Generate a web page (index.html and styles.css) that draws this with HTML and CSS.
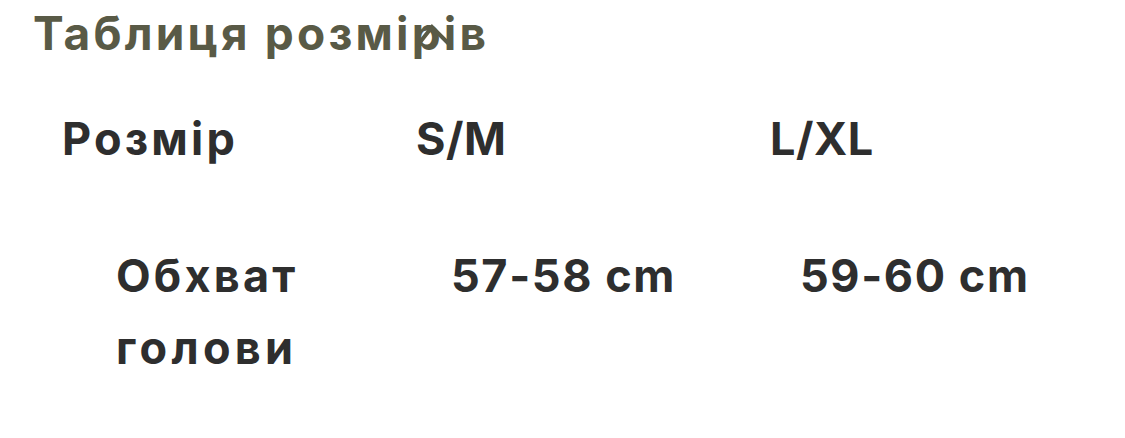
FILE: index.html
```html
<!DOCTYPE html>
<html lang="uk">
<head>
<meta charset="utf-8">
<title>Таблиця розмірів</title>
<link rel="stylesheet" href="styles.css">
</head>
<body>
<section class="sheet">
  <h2 class="title">Таблиця розмірів<svg class="chevron" width="42" height="28" viewBox="0 0 42 28"><polyline points="4,25 19,6 38,25" fill="none" stroke="#595a46" stroke-width="4"/></svg></h2>
  <div class="size-table">
    <div class="cell head c1">Розмір</div>
    <div class="cell head c2">S/M</div>
    <div class="cell head c3">L/XL</div>
    <div class="cell body c1"><span class="w1">Обхват</span><br><span class="w2">голови</span></div>
    <div class="cell body c2 num">57-58 cm</div>
    <div class="cell body c3 num">59-60 cm</div>
  </div>
</section>
</body>
</html>
```
FILE: styles.css
```css
html, body {
  margin: 0;
  padding: 0;
  background: #ffffff;
}
.sheet {
  width: 1125px;
  height: 438px;
  overflow: hidden;
  font-family: Inter, "Open Sans", "Liberation Sans", sans-serif;
  font-weight: 700;
}
.title {
  position: relative;
  display: inline-block;
  margin: 0;
  padding: 0 0 0 33px;
  font-size: 46px;
  line-height: 66px;
  letter-spacing: 3.2px;
  color: #595a46;
  font-weight: 700;
}
.chevron {
  position: absolute;
  left: 413px;
  top: 21px;
}
.size-table {
  display: grid;
  grid-template-columns: 354px 354px 354px;
  padding: 38px 0 0 62px;
  color: #2e2e2e;
  font-size: 45px;
}
.cell.head {
  line-height: 70px;
  padding-bottom: 66px;
  letter-spacing: 3.2px;
}
.cell.head.c2, .cell.head.c3 {
  letter-spacing: 0.5px;
}
.cell.body {
  line-height: 72px;
}
.w1 { letter-spacing: 3.2px; }
.w2 { letter-spacing: 4.3px; }
.num { letter-spacing: 1.6px; }
.body.c1 { padding-left: 54px; }
.body.c2 { padding-left: 35px; }
.body.c3 { padding-left: 30px; }
```
